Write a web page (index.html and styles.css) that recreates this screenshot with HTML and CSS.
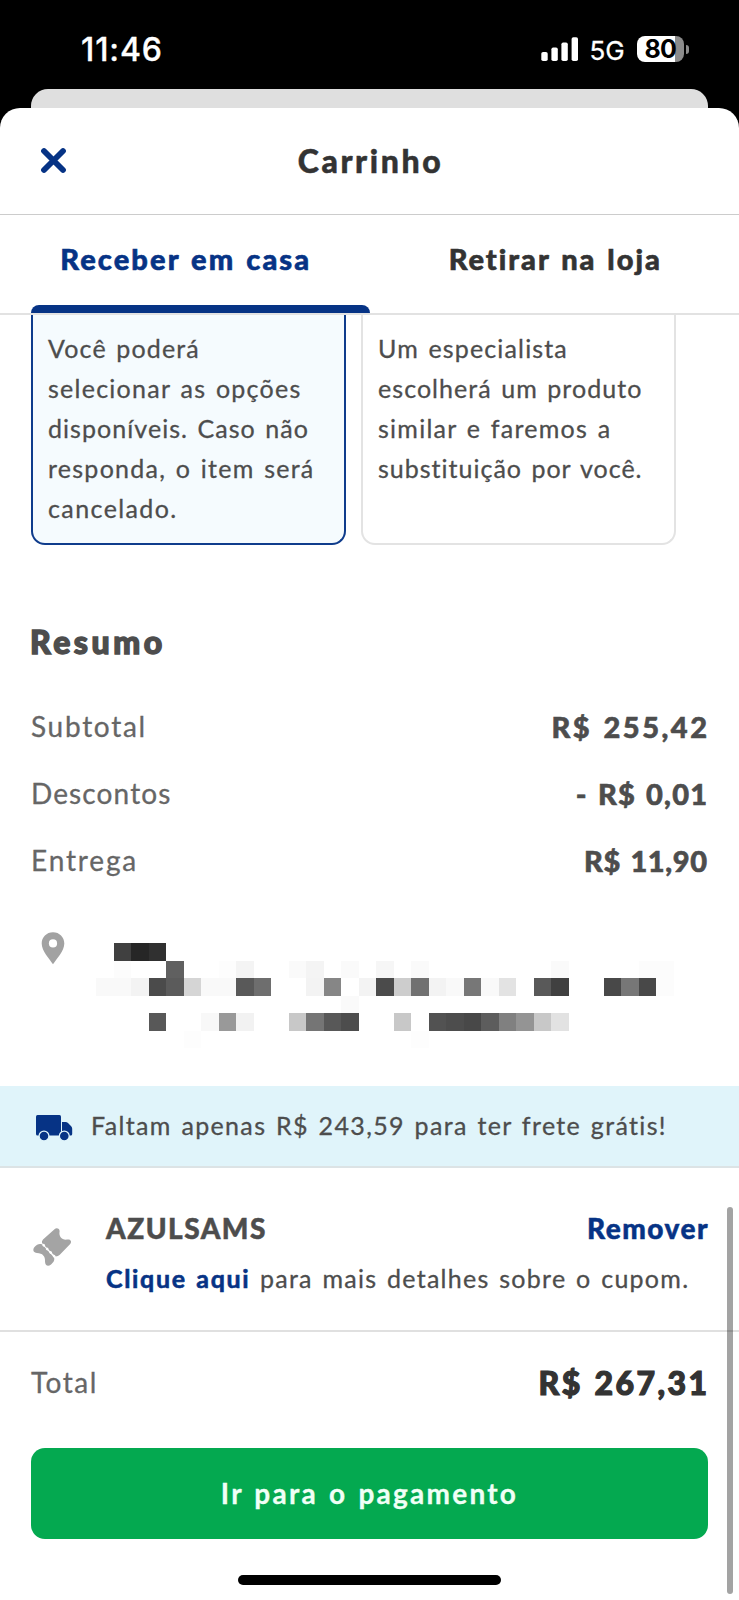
FILE: index.html
```
<!DOCTYPE html>
<html lang="pt-BR">
<head>
<meta charset="utf-8">
<title>Carrinho</title>
<link rel="stylesheet" href="styles.css">
</head>
<body>
<div class="phone">
  <div class="status">
    <span class="clock">11:46</span>
    <div class="status-right">
      <svg class="signal" width="38" height="25" viewBox="0 0 38 25" fill="#fff"><rect x="0.3" y="15" width="6.4" height="9" rx="1.8"/><rect x="10.4" y="10.5" width="6.4" height="13.5" rx="1.8"/><rect x="20.4" y="5.5" width="6.4" height="18.5" rx="1.8"/><rect x="30.6" y="0.3" width="6.4" height="23.7" rx="1.8"/></svg>
      <span class="net">5G</span>
      <div class="battery"><span class="level">80</span></div>
      <span class="battery-tip"></span>
    </div>
  </div>
  <div class="back-card"></div>
  <div class="sheet">
    <header class="header">
      <svg class="close" width="27" height="27" viewBox="0 0 27 27"><path d="M4 4L23 23M23 4L4 23" stroke="#063385" stroke-width="5.8" stroke-linecap="round"/></svg>
      <h1 class="title">Carrinho</h1>
    </header>
    <nav class="tabs">
      <div class="tab active"><span>Receber em casa</span></div>
      <div class="tab"><span class="pickup">Retirar na loja</span></div>
    </nav>
    <div class="options">
      <div class="option selected">
        <p class="ls-120">Você poderá</p>
        <p class="ls-126">selecionar as opções</p>
        <p class="ls-105">disponíveis. Caso não</p>
        <p class="ls-125">responda, o item será</p>
        <p class="ls-140">cancelado.</p>
      </div>
      <div class="option">
        <p class="ls-120">Um especialista</p>
        <p class="ls-105">escolherá um produto</p>
        <p class="ls-125">similar e faremos a</p>
        <p class="ls-100">substituição por você.</p>
      </div>
    </div>
    <h2 class="summary-title">Resumo</h2>
    <div class="row"><span class="subtotal">Subtotal</span><b class="wide">R$ 255,42</b></div>
    <div class="row"><span class="discount">Descontos</span><b class="discount-value">- R$ 0,01</b></div>
    <div class="row"><span class="delivery">Entrega</span><b class="delivery-value">R$ 11,90</b></div>
    <div class="address">
      <svg class="pin" width="24" height="33" viewBox="0 0 24 33"><path d="M12 .3C5.6.3.7 5.2.7 11.5C.7 19 8.500 27 12 32.300C15.500 27 23.300 19 23.300 11.500C23.300 5.200 18.400.3 12 .3Z" fill="#a2a2a2"/><circle cx="12" cy="11.400" r="4.100" fill="#fff"/></svg>
      <svg class="mosaic" width="578" height="105" viewBox="0 0 33 6" preserveAspectRatio="none" shape-rendering="crispEdges">
        <g><path fill="#404040" d="M1 0h1v1h-1z"/><path fill="#262626" d="M2 0h1v1h-1z"/><path fill="#303030" d="M3 0h1v1h-1z"/></g>
        <g><path fill="#fcfcfc" d="M1 1h1v1h-1zM31 1h2v1h-2z"/><path fill="#606060" d="M4 1h1v1h-1z"/><path fill="#fdfdfd" d="M7 1h1v1h-1z"/><path fill="#f4f4f4" d="M8 1h1v1h-1zM12 1h1v1h-1z"/><path fill="#fafafa" d="M11 1h1v1h-1zM14 1h1v1h-1zM18 1h1v1h-1zM26 1h1v1h-1z"/><path fill="#f6f6f6" d="M16 1h1v1h-1z"/></g>
        <g><path fill="#f9f9f9" d="M0 2h2v1h-2zM6 2h2v1h-2zM20 2h1v1h-1zM22 2h1v1h-1z"/><path fill="#f3f3f3" d="M2 2h1v1h-1zM12 2h1v1h-1zM15 2h1v1h-1zM19 2h1v1h-1z"/><path fill="#4b4b4b" d="M3 2h1v1h-1zM16 2h1v1h-1z"/><path fill="#5b5b5b" d="M4 2h1v1h-1z"/><path fill="#d5d5d5" d="M5 2h1v1h-1z"/><path fill="#595959" d="M8 2h1v1h-1zM25 2h1v1h-1z"/><path fill="#6e6e6e" d="M9 2h1v1h-1z"/><path fill="#868686" d="M13 2h1v1h-1z"/><path fill="#cdcdcd" d="M17 2h1v1h-1z"/><path fill="#717171" d="M18 2h1v1h-1z"/><path fill="#777" d="M21 2h1v1h-1zM30 2h1v1h-1z"/><path fill="#e3e3e3" d="M23 2h1v1h-1z"/><path fill="#404040" d="M26 2h1v1h-1z"/><path fill="#484848" d="M29 2h1v1h-1zM31 2h1v1h-1z"/><path fill="#fcfcfc" d="M32 2h1v1h-1z"/></g>
        <path fill="#fafafa" d="M14 3h1v1h-1z"/>
        <g><path fill="#585858" d="M3 4h1v1h-1zM13 4h1v1h-1z"/><path fill="#f8f8f8" d="M6 4h1v1h-1z"/><path fill="#999" d="M7 4h1v1h-1z"/><path fill="#f2f2f2" d="M8 4h1v1h-1z"/><path fill="#c8c8c8" d="M11 4h1v1h-1zM17 4h1v1h-1zM25 4h1v1h-1z"/><path fill="#757575" d="M12 4h1v1h-1z"/><path fill="#4d4d4d" d="M14 4h1v1h-1zM20 4h1v1h-1z"/><path fill="#525252" d="M19 4h1v1h-1z"/><path fill="#484848" d="M21 4h1v1h-1z"/><path fill="#5d5d5d" d="M22 4h1v1h-1z"/><path fill="#808080" d="M23 4h1v1h-1z"/><path fill="#949494" d="M24 4h1v1h-1z"/><path fill="#e2e2e2" d="M26 4h1v1h-1z"/></g>
        <path fill="#fdfdfd" d="M5 5h1v1h-1zM18 5h1v1h-1z"/>
      </svg>
    </div>
    <div class="banner">
      <svg width="37" height="26" viewBox="0 0 37 26" fill="#063385"><rect width="25" height="20.500" rx="1.500"/><path d="M26 7H29.500Q31 7 32 8L35.200 11.200Q36.200 12.200 36.200 13.800V19Q36.200 20.500 34.700 20.500H26Z"/><g stroke="#e0f4fa" stroke-width="1.200"><circle cx="8" cy="21" r="4.900"/><circle cx="28.300" cy="21" r="4.900"/></g></svg>
      <span>Faltam apenas R$ 243,59 para ter frete grátis!</span>
    </div>
    <div class="coupon">
      <svg class="ticket" width="39" height="39" viewBox="0 0 39 39" fill="#a4a4a4"><path d="M9 15Q8.500 13 10 11.400L21.500 1.200C23.500-.5 26.800.5 26.600 3.500C25.500 8 29 12.700 34.500 11.600C37.800 11 39 13.800 37.200 16L26.800 26.800Q25 28.600 22.500 28.500Z"/><path d="M9.300 16.500C6 15.300 4 16.500 1.500 19C-.7 21.600.4 24.800 4 25C9.500 25 12.500 28.500 12 33.500C12 37.500 15 38.800 17.700 36.800C20.300 34.500 22 32.500 21 29.500Z"/><path d="M10.600 17.200L21.600 28.600" stroke="#fff" stroke-width="2.500" stroke-linecap="round" stroke-dasharray=".4 4.600"/></svg>
      <div class="coupon-body">
        <div class="coupon-top"><b class="code">AZULSAMS</b><b class="remove">Remover</b></div>
        <div class="coupon-text"><b>Clique aqui</b> <span>para mais detalhes sobre o cupom.</span></div>
      </div>
    </div>
    <div class="total"><span>Total</span><b>R$ 267,31</b></div>
    <div class="pay">Ir para o pagamento</div>
    <div class="home-bar"></div>
  </div>
  <div class="scrollbar"></div>
</div>
</body>
</html>
```
FILE: styles.css
```
* { box-sizing: border-box; }
body, h1, h2, p { margin: 0; }
body { background: #000; font-family: Lato, "Liberation Sans", sans-serif; font-size: 25px; font-variant-ligatures: none; color: #4d4d4d; }
svg { display: block; flex: none; overflow: visible; }
.phone { width: 739px; height: 1600px; position: relative; overflow: hidden; }

.status { height: 89px; padding: 9px 50px 0 81px; display: flex; justify-content: space-between; align-items: center; color: #fff; font-family: Inter, sans-serif; }
.clock { font-size: 32px; font-weight: 500; letter-spacing: 0.9px; -webkit-text-stroke: 0.3px; }
.status-right { display: flex; align-items: center; }
.net { font-size: 26px; font-weight: 400; margin: 2px 12.500px 0 10px; letter-spacing: -0.1px; -webkit-text-stroke: 0.3px; }
.battery { width: 47px; height: 26px; border-radius: 8px; background: linear-gradient(90deg, #fff 38px, #8b8b8b 38px); color: #000; font-size: 25px; font-weight: 700; line-height: 27px; padding-left: 7.500px; }
.level { letter-spacing: -0.8px; }
.battery-tip { width: 3px; height: 9px; margin-left: 2px; border-radius: 0 4px 4px 0; background: #8b8b8b; }

.back-card { height: 19px; margin: 0 31px; border-radius: 17px 17px 0 0; background: #dfdfdf; }
.sheet { height: 1492px; background: #fff; border-radius: 20px 20px 0 0; }

.header { height: 107px; border-bottom: 1px solid #ccc; display: grid; grid-template-columns: 80px 1fr 80px; align-items: center; }
.close { margin: 0 0 1px 40px; }
.title { font-size: 32px; line-height: 60px; font-weight: 900; letter-spacing: 2.600px; color: #333; text-align: center; margin: 0 0 0 2px; -webkit-text-stroke: 0.5px; }

.tabs { height: 100px; border-bottom: 2px solid #e2e2e2; display: flex; }
.tab { flex: 1; height: 98px; position: relative; text-align: center; font-size: 29px; line-height: 88px; font-weight: 900; word-spacing: 2px; letter-spacing: 2.100px; color: #333; -webkit-text-stroke: 0.6px; }
.tab span { margin-left: 2px; }
.tab .pickup { letter-spacing: 2px; }
.tab.active { color: #063385; }
.tab.active::after { content: ""; position: absolute; left: 31px; right: 0; bottom: 0; height: 8px; border-radius: 8px 8px 0 0; background: #063385; }

.options { display: flex; gap: 15px; padding: 0 31px; }
.option { width: 315px; height: 230px; padding: 14px 0 0 15px; border: 2px solid #e3e3e3; border-top: 0; border-radius: 0 0 14px 14px; word-spacing: 2px; line-height: 39.900px; white-space: nowrap; -webkit-text-stroke: 0.3px; }
.option.selected { border-color: #0f3c8c; background: #f5fbfe; }
.ls-100 { letter-spacing: 1px; }
.ls-105 { letter-spacing: 1.050px; }
.ls-120 { letter-spacing: 1.150px; }
.ls-125 { letter-spacing: 1.250px; }
.ls-126 { letter-spacing: 1.260px; }
.ls-140 { letter-spacing: 1.400px; }

.summary-title { margin: 77px 0 31px 30px; font-size: 32px; line-height: 40px; font-weight: 900; letter-spacing: 3.500px; -webkit-text-stroke: 1.400px; }
.row { height: 67px; padding: 0 32px 0 31px; display: flex; justify-content: space-between; align-items: center; line-height: 67px; font-size: 28px; color: #666; -webkit-text-stroke: 0.3px; }
.row b { color: #4d4d4d; font-size: 29px; font-weight: 900; word-spacing: 2px; -webkit-text-stroke: 0.6px; }
.wide { letter-spacing: 2.500px; margin-right: -2.500px; }
.discount-value { letter-spacing: 1.200px; margin-right: -1.200px; }
.delivery-value { letter-spacing: 0.600px; margin-right: -0.600px; }
.subtotal { letter-spacing: 1.710px; }
.discount { letter-spacing: 1.120px; }
.delivery { letter-spacing: 1.850px; }

.address { height: 192px; padding: 38px 0 0 41px; display: flex; gap: 31px; align-items: flex-start; }
.mosaic { margin-top: 11px; }

.banner { height: 82px; padding: 0 0 2px 36px; border-bottom: 2px solid #dce3e5; background: #e0f4fa; display: flex; align-items: center; gap: 18px; line-height: 78px; word-spacing: 2px; letter-spacing: 1.340px; white-space: nowrap; -webkit-text-stroke: 0.3px; }
.banner svg { margin-top: 5px; }

.coupon { height: 164px; padding: 35px 31px 0 33px; border-bottom: 2px solid #e0e0e0; display: flex; gap: 34px; }
.ticket { margin-top: 25px; }
.coupon-body { flex: 1; line-height: 50px; white-space: nowrap; }
.coupon-top { display: flex; justify-content: space-between; font-size: 28px; font-weight: 700; -webkit-text-stroke: 0.5px; }
.code { letter-spacing: 1.500px; }
.remove { letter-spacing: 1.500px; margin-right: -1px; }
.remove, .coupon-text b { color: #063385; }
.coupon-text { word-spacing: 2px; letter-spacing: 1.270px; -webkit-text-stroke: 0.3px; }
.coupon-text b { letter-spacing: 1.650px; -webkit-text-stroke: 0.6px; }

.total { height: 100px; padding: 0 32px 0 31px; display: flex; justify-content: space-between; align-items: center; line-height: 101px; font-size: 28px; letter-spacing: 1.500px; color: #666; -webkit-text-stroke: 0.3px; }
.total b { font-size: 32px; font-weight: 900; word-spacing: 2px; letter-spacing: 2.400px; margin-right: -2.400px; color: #333; -webkit-text-stroke: 1.200px; }
.pay { height: 91px; margin: 16px 31px 0; border-radius: 14px; background: #04a950; color: #f0fff6; font-size: 28px; line-height: 91px; font-weight: 700; word-spacing: 2px; letter-spacing: 2.250px; text-align: center; -webkit-text-stroke: 0.3px; }
.home-bar { width: 263px; height: 10px; margin: 36px auto 0; border-radius: 5px; background: #000; }
.scrollbar { position: absolute; left: 727px; top: 1207px; width: 6px; height: 387px; border-radius: 3px; background: rgba(0, 0, 0, 0.36); }
```
